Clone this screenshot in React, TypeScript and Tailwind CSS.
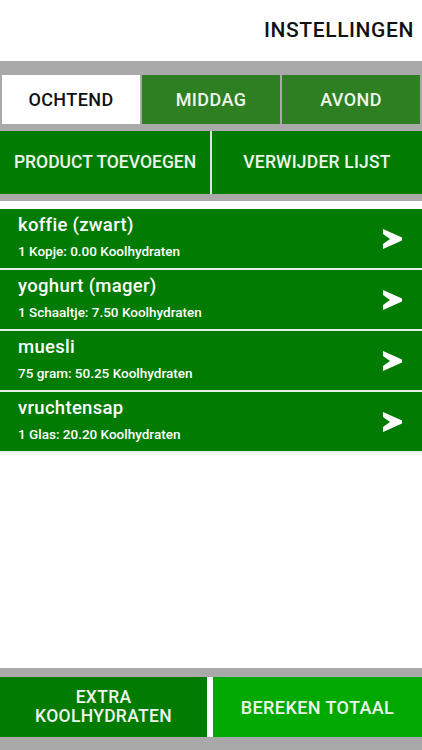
import React from 'react';

interface FoodItem {
  name: string;
  detail: string;
}

const items: FoodItem[] = [
  { name: 'koffie (zwart)', detail: '1 Kopje: 0.00 Koolhydraten' },
  { name: 'yoghurt (mager)', detail: '1 Schaaltje: 7.50 Koolhydraten' },
  { name: 'muesli', detail: '75 gram: 50.25 Koolhydraten' },
  { name: 'vruchtensap', detail: '1 Glas: 20.20 Koolhydraten' },
];

const tabs = ['OCHTEND', 'MIDDAG', 'AVOND'];

const Chevron = () => (
  <svg width="19" height="20" viewBox="0 0 19 20" className="shrink-0">
    <polygon points="0,0 19,8.5 19,11.5 0,20 0,15 7,10 0,5" fill="#ffffff" />
  </svg>
);

export default function App() {
  const font = { fontFamily: 'Roboto, "Liberation Sans", sans-serif' };

  return (
    <div className="w-[422px] h-[750px] bg-white flex flex-col overflow-hidden" style={font}>
      {/* Header */}
      <div className="h-[61px] flex items-center justify-end pr-[8px]">
        <span className="text-[21px] tracking-[0.6px] text-[#111111] font-medium">INSTELLINGEN</span>
      </div>

      {/* Tabs + actions */}
      <div className="bg-[#a9a9a9] pt-[14px] pb-[7px]">
        <div className="grid grid-cols-3 gap-[2px] px-[2px] h-[49px]">
          {tabs.map((tab, i) => (
            <div
              key={tab}
              className={
                i === 0
                  ? 'bg-white flex items-center justify-center text-[18px] text-[#111111] font-medium tracking-[0.4px]'
                  : 'bg-[#2e7f22] flex items-center justify-center text-[18px] text-[#eef5ec] font-medium tracking-[0.4px]'
              }
            >
              {tab}
            </div>
          ))}
        </div>
        <div className="mt-[7px] h-[63px] flex">
          <div className="w-[210px] bg-[#017c01] flex items-center justify-center text-[17.5px] text-[#eef5ec] font-medium">
            PRODUCT TOEVOEGEN
          </div>
          <div className="w-[2px] bg-[#d8e8d8]" />
          <div className="flex-1 bg-[#017c01] flex items-center justify-center text-[17.5px] text-[#eef5ec] font-medium tracking-[0.2px]">
            VERWIJDER LIJST
          </div>
        </div>
      </div>

      {/* List */}
      <div className="flex-1 pt-[8px] flex flex-col">
        {items.map((item) => (
          <div key={item.name} className="h-[61px] border-b-2 border-[#e6efe6] bg-[#017b01] flex items-center pl-[18px] pr-[20px]">
            <div className="flex-1 flex flex-col">
              <span className="text-[18.5px] leading-[22px] text-white font-medium tracking-[0.3px] -mt-[4px]">{item.name}</span>
              <span className="mt-[7px] text-[13.5px] leading-[16px] text-white font-medium">{item.detail}</span>
            </div>
            <Chevron />
          </div>
        ))}
      </div>

      {/* Bottom buttons */}
      <div className="bg-[#a9a9a9] pt-[9px] pb-[13px]">
        <div className="h-[60px] flex">
          <div className="w-[207px] bg-[#017c01] flex flex-col items-center justify-center text-center text-[17.5px] leading-[19px] text-[#eef5ec] font-medium tracking-[0.3px]">
            <span>EXTRA</span>
            <span>KOOLHYDRATEN</span>
          </div>
          <div className="w-[6px] bg-white" />
          <div className="flex-1 bg-[#00a900] flex items-center justify-center text-[18px] text-[#eef5ec] font-medium tracking-[0.4px]">
            BEREKEN TOTAAL
          </div>
        </div>
      </div>
    </div>
  );
}
